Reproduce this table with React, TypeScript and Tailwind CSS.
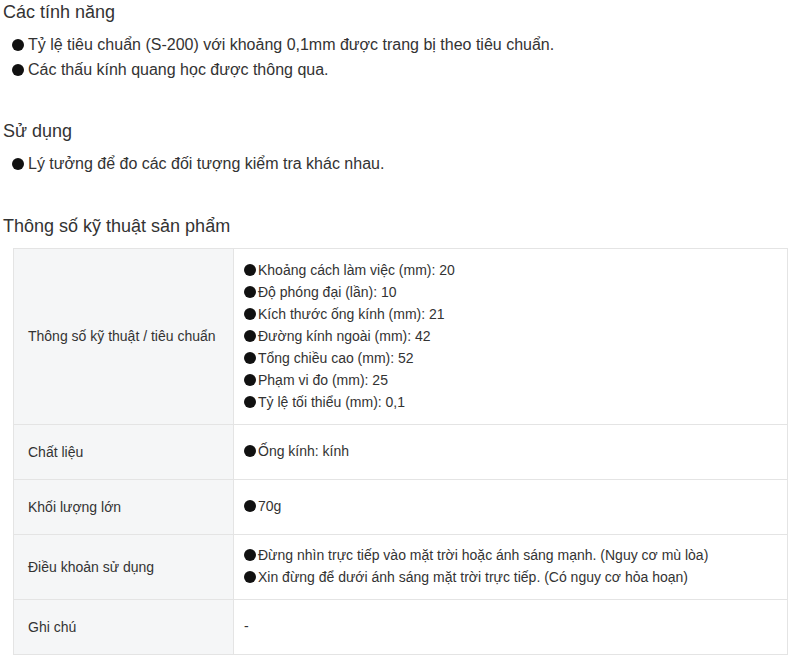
const font = { fontFamily: '"Liberation Sans", Arial, sans-serif' };

const features = [
  "Tỷ lệ tiêu chuẩn (S-200) với khoảng 0,1mm được trang bị theo tiêu chuẩn.",
  "Các thấu kính quang học được thông qua.",
];

const usage = ["Lý tưởng để đo các đối tượng kiểm tra khác nhau."];

const specRows: { label: string; items: string[]; h: string }[] = [
  {
    label: "Thông số kỹ thuật / tiêu chuẩn",
    items: [
      "Khoảng cách làm việc (mm): 20",
      "Độ phóng đại (lần): 10",
      "Kích thước ống kính (mm): 21",
      "Đường kính ngoài (mm): 42",
      "Tổng chiều cao (mm): 52",
      "Phạm vi đo (mm): 25",
      "Tỷ lệ tối thiểu (mm): 0,1",
    ],
    h: "h-[175px]",
  },
  { label: "Chất liệu", items: ["Ống kính: kính"], h: "h-[55px]" },
  { label: "Khối lượng lớn", items: ["70g"], h: "h-[55px]" },
  {
    label: "Điều khoản sử dụng",
    items: [
      "Đừng nhìn trực tiếp vào mặt trời hoặc ánh sáng mạnh. (Nguy cơ mù lòa)",
      "Xin đừng để dưới ánh sáng mặt trời trực tiếp. (Có nguy cơ hỏa hoạn)",
    ],
    h: "h-[65px]",
  },
  { label: "Ghi chú", items: [], h: "h-[55px]" },
];

function Dot() {
  return <span className="mr-[2px] inline-block h-[12px] w-[12px] shrink-0 rounded-full bg-[#111]" />;
}

function Heading({ children }: { children: React.ReactNode }) {
  return <h2 className="pl-[3px] text-[18px] leading-[24px] text-[#333]">{children}</h2>;
}

function BulletList({ items }: { items: string[] }) {
  return (
    <ul className="mt-[8px] pl-[12px] text-[16px] leading-[25px] text-[#333]">
      {items.map((t) => (
        <li key={t} className="flex items-center">
          <Dot />
          <span className="ml-[2px]">{t}</span>
        </li>
      ))}
    </ul>
  );
}

export default function App() {
  return (
    <div className="min-h-screen bg-white pb-4" style={font}>
      <Heading>Các tính năng</Heading>
      <BulletList items={features} />

      <div className="mt-[37px]">
        <Heading>Sử dụng</Heading>
        <BulletList items={usage} />
      </div>

      <div className="mt-[38px]">
        <Heading>Thông số kỹ thuật sản phẩm</Heading>
        <div className="ml-[13px] mr-[1px] mt-[10px] border border-[#e4e4e4] text-[14px] text-[#333]">
          {specRows.map((row, i) => (
            <div
              key={row.label}
              className={`grid grid-cols-[220px_1fr] ${row.h} ${i > 0 ? "border-t border-[#e4e4e4]" : ""}`}
            >
              <div className="flex items-center border-r border-[#e4e4e4] bg-[#f5f6f7] pl-[14px]">
                {row.label}
              </div>
              <div className="flex flex-col justify-center pl-[10px] pb-[2px] leading-[22px]">
                {row.items.length === 0 ? (
                  <span>-</span>
                ) : (
                  row.items.map((t) => (
                    <div key={t} className="flex items-center">
                      <Dot />
                      <span>{t}</span>
                    </div>
                  ))
                )}
              </div>
            </div>
          ))}
        </div>
      </div>
    </div>
  );
}
